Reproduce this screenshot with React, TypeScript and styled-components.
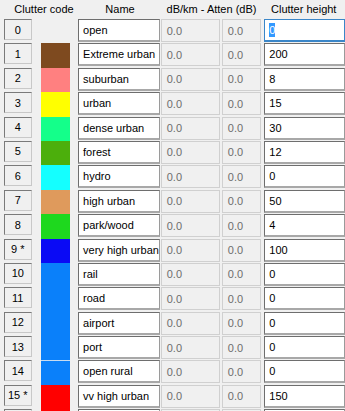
import React from "react";
import styled, { createGlobalStyle } from "styled-components";

const Global = createGlobalStyle`
  html, body { margin: 0; padding: 0; background: #f0f0f0; }
  body { font-family: "Liberation Sans", Arial, sans-serif; font-size: 11px; color: #000; }
`;

const Page = styled.div`
  width: 345px;
  height: 411px;
  overflow: hidden;
  background: #f0f0f0;
`;

const Header = styled.div`
  display: grid;
  grid-template-columns: 88px 64px 119px 64px;
  height: 19px;
  align-items: center;
`;

const HeaderLabel = styled.div`
  text-align: center;
  white-space: nowrap;
  font-size: 11px;
  color: #000;
  padding-bottom: 1px;
`;

const Row = styled.div`
  display: flex;
  align-items: flex-start;
  height: 24.4px;
`;

const CodeBox = styled.div`
  box-sizing: border-box;
  margin-left: 4px;
  width: 28px;
  height: 21px;
  background: #f0f0f0;
  border-top: 1px solid #7a7a7a;
  border-left: 1px solid #7a7a7a;
  border-right: 1px solid #c8c8c8;
  border-bottom: 1px solid #c8c8c8;
  display: flex;
  align-items: center;
  justify-content: center;
  white-space: nowrap;
`;

const Swatch = styled.div<{ $color: string; $sep?: boolean }>`
  margin-left: 9px;
  width: 30px;
  height: 24.4px;
  box-sizing: border-box;
  background: ${(p) => p.$color};
  border-top: ${(p) => (p.$sep ? "1px solid #c8dcf0" : "none")};
`;

const Field = styled.div`
  box-sizing: border-box;
  height: 23px;
  display: flex;
  align-items: center;
  padding-left: 4px;
  white-space: nowrap;
  overflow: hidden;
`;

const NameField = styled(Field)`
  margin-left: 8px;
  width: 83px;
  background: #fff;
  border-top: 1px solid #6e6e6e;
  border-left: 1px solid #6e6e6e;
  border-right: 1px solid #9a9a9a;
  border-bottom: 2px solid #a8a8a8;
`;

const AttField = styled(Field)<{ $w: number; $ml: number }>`
  margin-left: ${(p) => p.$ml}px;
  width: ${(p) => p.$w}px;
  background: #f0f0f0;
  color: #6d6d6d;
  border: 1px solid #d0d0d0;
  padding-left: 5px;
`;

const HeightField = styled(Field)<{ $focus?: boolean }>`
  margin-left: 3px;
  width: 82px;
  background: #fff;
  border-top: 1px solid ${(p) => (p.$focus ? "#3a86c8" : "#6e6e6e")};
  border-left: 1px solid ${(p) => (p.$focus ? "#3a86c8" : "#6e6e6e")};
  border-right: 1px solid ${(p) => (p.$focus ? "#3a86c8" : "#9a9a9a")};
  border-bottom: 2px solid ${(p) => (p.$focus ? "#3a86c8" : "#a8a8a8")};
`;

const Selected = styled.span`
  background: #3399ff;
  color: #fff;
  padding: 1px 0;
`;

type R = { code: string; color: string; name: string; h: string; att: string; sep?: boolean };

const rows: R[] = [
  { code: "0", color: "transparent", name: "open", h: "0", att: "0.0" },
  { code: "1", color: "#7e4a1f", name: "Extreme urban", h: "200", att: "0.0" },
  { code: "2", color: "#ff8080", name: "suburban", h: "8", att: "0.0" },
  { code: "3", color: "#ffff00", name: "urban", h: "15", att: "0.0" },
  { code: "4", color: "#14ff8a", name: "dense urban", h: "30", att: "0.0" },
  { code: "5", color: "#4caf0c", name: "forest", h: "12", att: "0.0" },
  { code: "6", color: "#14ffff", name: "hydro", h: "0", att: "0.0" },
  { code: "7", color: "#df9a5c", name: "high urban", h: "50", att: "0.0" },
  { code: "8", color: "#1ed81e", name: "park/wood", h: "4", att: "0.0" },
  { code: "9 *", color: "#0a0af5", name: "very high urban", h: "100", att: "0.0" },
  { code: "10", color: "#0a80fa", name: "rail", h: "0", att: "0.0" },
  { code: "11", color: "#0a80fa", name: "road", h: "0", att: "0.0" },
  { code: "12", color: "#0a80fa", name: "airport", h: "0", att: "0.0" },
  { code: "13", color: "#0a80fa", name: "port", h: "0", att: "0.0" },
  { code: "14", color: "#0a80fa", name: "open rural", h: "0", att: "0.0", sep: true },
  { code: "15 *", color: "#ff0000", name: "vv high urban", h: "150", att: "0.0" },
  { code: "", color: "#ff0000", name: "", h: "", att: "" },
];

export default function App() {
  return (
    <Page>
      <Global />
      <Header>
        <HeaderLabel>Clutter code</HeaderLabel>
        <HeaderLabel>Name</HeaderLabel>
        <HeaderLabel>dB/km - Atten (dB)</HeaderLabel>
        <HeaderLabel>Clutter height</HeaderLabel>
      </Header>
      {rows.map((r, i) => (
        <Row key={i}>
          <CodeBox>{r.code}</CodeBox>
          <Swatch $color={r.color} $sep={r.sep} />
          <NameField>{r.name}</NameField>
          <AttField $w={60} $ml={1}>{r.att}</AttField>
          <AttField $w={40} $ml={2}>{r.att}</AttField>
          <HeightField $focus={i === 0}>
            {i === 0 ? <Selected>{r.h}</Selected> : r.h}
          </HeightField>
        </Row>
      ))}
    </Page>
  );
}
